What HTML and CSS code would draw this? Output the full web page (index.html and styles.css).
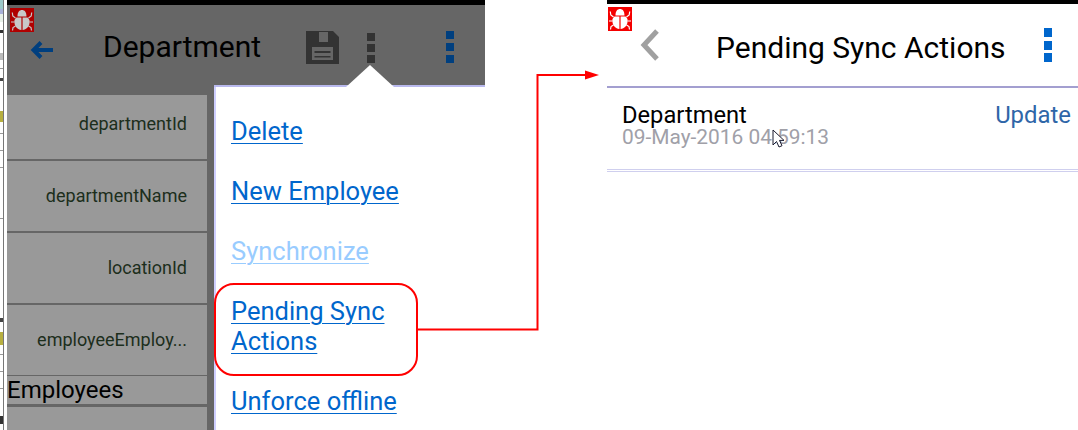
FILE: index.html
```html
<!DOCTYPE html>
<html lang="en">
<head>
<meta charset="utf-8">
<title>Pending Sync Actions</title>
<link rel="stylesheet" href="styles.css">
</head>
<body>
<svg width="0" height="0" class="defs">
  <defs>
    <symbol id="bug" viewBox="0 0 24 24">
      <path class="bug-body" d="M7.500 8.500C7.500 4 9.500 2 12 2s4.500 2 4.500 6.500zM11.400 9.500H6.500C4.500 11 4 13 4.500 15c.5 4 3 6.500 6.900 7zM12.600 9.500h4.900c2 1.500 2.500 3.500 2 5.500-.5 4-3 6.500-6.900 7z"/>
      <path class="bug-legs" d="M5.500 10 2.800 8 2.300 4.500M18.500 10l2.700-2 .5-3.500M4.500 14H1M19.500 14H23M5.500 18 3 19.500 2.500 22.500M18.500 18l2.500 1.500.5 3"/>
    </symbol>
  </defs>
</svg>
<div class="page">
  <div class="edge"><span class="edge-bits"></span><span class="edge-line"></span></div>

  <section class="screen dimmed">
    <div class="black-bar"></div>
    <header class="dim-header">
      <svg class="back-arrow" viewBox="0 0 24 20"><path d="M11 2.500 3.500 10l7.500 7.500M4 10h19"/></svg>
      <h1 class="dim-title">Department</h1>
      <svg class="save" viewBox="0 0 33 33"><path d="M0 0h27l6 6v27H0zM13 1v10h9V1zM6 16v13h21V16z" fill-rule="evenodd"/><path d="M8.500 20h16v2h-16zM8.500 25h16v1.500h-16z"/></svg>
      <div class="dots dots-dark"><i></i><i></i><i></i></div>
      <div class="dots dots-navy"><i></i><i></i><i></i></div>
    </header>
    <div class="form">
      <div class="row"><div class="label">departmentId</div></div>
      <div class="row"><div class="label">departmentName</div></div>
      <div class="row"><div class="label">locationId</div></div>
      <div class="row row-short"><div class="label">employeeEmploy...</div></div>
      <div class="section-title">Employees</div>
      <div class="row row-rest"><div class="label"></div></div>
    </div>
    <svg class="bug-badge bug-dim"><use href="#bug"/></svg>
    <nav class="menu">
      <svg class="notch" viewBox="0 0 48 22"><path d="M0 22 24 0l24 22z"/></svg>
      <a href="#">Delete</a>
      <a href="#">New Employee</a>
      <a href="#" class="disabled">Synchronize</a>
      <a href="#" class="two-line">Pending Sync<br>Actions</a>
      <a href="#">Unforce offline</a>
    </nav>
  </section>

  <div class="gutter"></div>

  <section class="screen light">
    <div class="black-bar thin"></div>
    <header class="light-header">
      <svg class="chevron" viewBox="0 0 20 34"><path d="M17 3 4 17l13 14"/></svg>
      <h1 class="light-title">Pending Sync Actions</h1>
      <div class="dots dots-blue"><i></i><i></i><i></i></div>
    </header>
    <div class="item">
      <div class="item-text">
        <div class="item-name">Department</div>
        <div class="item-date">09-May-2016 04:59:13</div>
      </div>
      <div class="item-action">Update</div>
    </div>
    <svg class="bug-badge bug-bright"><use href="#bug"/></svg>
  </section>
</div>

<svg class="callout" viewBox="0 0 1078 430">
  <rect x="215" y="284" width="202" height="91" rx="19" class="red-line"/>
  <path d="M417 329.500H537.500V75H586" class="red-line"/>
  <path d="M585 70.500 599 75l-14 4.500z" class="red-fill"/>
</svg>
<svg class="cursor" viewBox="0 0 14 20"><path d="M1 1v15l3.500-3.500L7 18l3-1.300-2.500-5.300H12z"/></svg>
</body>
</html>
```
FILE: styles.css
```css
* { box-sizing: border-box; }
html, body { margin: 0; padding: 0; background: #fff; }
body { width: 1078px; height: 430px; overflow: hidden; position: relative; font-family: Roboto, "Liberation Sans", sans-serif; }
.defs { position: absolute; }
.page { display: flex; height: 430px; }

.edge { width: 7px; flex: none; background: #fff; display: flex; }
.edge-bits { display: block; width: 3px; height: 100%; background: linear-gradient(to bottom, #9cc8c8 0 9px, #a8b0d8 9px 14px, #e8f0e8 14px 22px, #fff 22px 30px, #333 30px 33px, #fff 33px 53px, #bbb 53px 60px, #fff 60px 68px, #999 68px 69px, #fff 69px 78px, #444 78px 81px, #fff 81px 111px, #b8b040 111px 122px, #fff 122px 133px, #999 133px 134px, #fff 134px 150px, #999 150px 151px, #fff 151px 167px, #999 167px 168px, #fff 168px 218px, #999 218px 219px, #fff 219px 318px, #444 318px 322px, #fff 322px 332px, #b8b040 332px 345px, #fff 345px 354px, #999 354px 355px, #fff 355px 371px, #999 371px 372px, #fff 372px 388px, #999 388px 389px, #fff 389px 416px, #333 416px 424px, #fff 424px); }
.edge-line { display: block; width: 1px; height: 100%; background: #777; }

.screen { position: relative; flex: none; height: 430px; overflow: hidden; }
.dimmed { width: 478px; background: #666; }
.light { width: 471px; background: #fff; }
.gutter { width: 122px; flex: none; }

.black-bar { height: 5px; background: #000; }
.black-bar.thin { height: 4px; }

.dim-header { height: 90px; display: flex; align-items: center; position: relative; padding-left: 23px; }
.back-arrow { width: 24px; height: 20px; fill: none; stroke: #003f7f; stroke-width: 4; margin-top: -1px; flex: none; }
.dim-title { margin: -6px 0 0 49px; font-size: 30px; font-weight: 400; line-height: 34px; color: #000; width: 200px; flex: none; }
.save { width: 33px; height: 33px; fill: #333; flex: none; margin: -6px 0 0 3px; }
.dots { display: flex; flex-direction: column; gap: 4px; flex: none; }
.dots i { display: block; width: 8px; height: 8px; }
.dots-dark { margin: -4px 0 0 28px; gap: 3px; }
.dots-dark i { background: #333; }
.dots-navy { margin: -6px 0 0 71px; }
.dots-navy i { background: #003f7f; }

.form { width: 207px; }
.row { display: flex; width: 200px; height: 72px; border-bottom: 2px solid #666; background: #999; }
.row:first-child { height: 66px; }
.label { flex: 1; text-align: right; padding: 20px 20px 0 0; font-size: 18px; line-height: 30px; color: #1c2e1c; white-space: nowrap; }
.row:first-child .label { padding-top: 14px; }
.row-short { height: 71px; border-bottom: 1px solid #666; }
.section-title { width: 200px; height: 28px; background: #999; font-size: 24px; line-height: 28px; color: #000; }
.row-rest { border-top: 3px solid #666; height: 40px; border-bottom: 0; }

.bug-badge { position: absolute; width: 24px; height: 24px; }
.bug-dim { left: 3px; top: 8px; background: #b00000; fill: #c8c8c8; stroke: #c8c8c8; }
.bug-bright { left: 1px; top: 7px; background: #f40000; fill: #fff; stroke: #fff; }
.bug-body { stroke: none; }
.bug-legs { fill: none; stroke-width: 1.200; }

.menu { position: absolute; left: 207px; top: 87px; width: 271px; height: 343px; background: #fff; border-left: 2px solid #cfcfff; box-shadow: 0 -2px 0 #b9b9ee; padding: 29px 0 0 15px; display: flex; flex-direction: column; gap: 30px; }
.menu a { font-size: 25.500px; line-height: 30px; color: #0066cc; text-decoration: underline; text-underline-offset: 3px; text-decoration-thickness: 1px; display: block; }
.menu a.disabled { color: #99ccff; }
.notch { position: absolute; left: 130px; top: -22px; width: 48px; height: 22px; fill: #fff; }

.light-header { height: 84px; display: flex; align-items: center; border-bottom: 2px solid #a39fd0; padding-left: 33px; }
.chevron { width: 20px; height: 34px; fill: none; stroke: #a0a0a0; stroke-width: 5; flex: none; margin-top: -1px; }
.light-title { margin: 5px 0 0 56px; font-size: 30px; font-weight: 400; line-height: 34px; color: #000; width: 328px; flex: none; white-space: nowrap; }
.dots-blue { gap: 3.500px; }
.dots-blue i { height: 9px; background: #0066cc; }

.item { height: 82px; display: flex; justify-content: space-between; padding: 15px 7px 0 15px; border-bottom: 1px solid #cfcfee; position: relative; }
.item::after { content: ""; position: absolute; left: 0; right: 0; bottom: -3px; height: 1px; background: #cfcfee; }
.item-name { font-size: 23.700px; line-height: 24px; color: #000; }
.item-date { font-size: 20.900px; line-height: 21px; color: #a0a0a8; }
.item-action { font-size: 23.900px; line-height: 24px; color: #2f66a8; }

.callout { position: absolute; left: 0; top: 0; width: 1078px; height: 430px; pointer-events: none; }
.red-line { fill: none; stroke: #f00; stroke-width: 2; }
.red-fill { fill: #f00; }
.cursor { position: absolute; left: 772px; top: 129px; width: 14px; height: 20px; fill: #fff; stroke: #1a1a2e; stroke-width: 1; }
```
